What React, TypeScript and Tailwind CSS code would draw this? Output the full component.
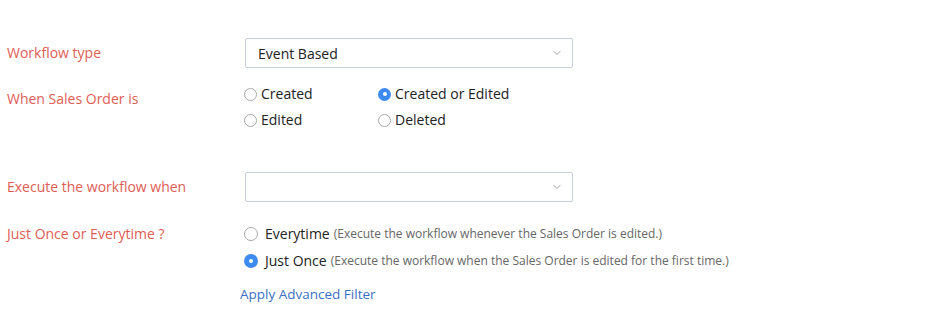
import { ChevronDown } from "lucide-react";

const Radio = ({ checked, size = 13 }: { checked?: boolean; size?: number }) => {
  if (checked) {
    return (
      <span
        className="flex items-center justify-center rounded-full bg-[#3d8bf2] shrink-0"
        style={{ width: size, height: size }}
      >
        <span className="w-[4px] h-[4px] rounded-full bg-white" />
      </span>
    );
  }
  return (
    <span
      className="rounded-full border border-[#a9a9a9] bg-white shrink-0"
      style={{ width: size, height: size }}
    />
  );
};

const Select = ({ value }: { value?: string }) => (
  <div className="w-[328px] h-[30px] border border-[#c7cfdb] rounded-[2px] bg-white flex items-center justify-between pl-[12px] pr-[9px]">
    <span className="text-[14px] text-[#222]">{value}</span>
    <ChevronDown size={12} strokeWidth={2} className="text-[#a0a0a0]" />
  </div>
);

const Label = ({ children, className = "" }: { children: React.ReactNode; className?: string }) => (
  <div className={`w-[245px] shrink-0 pl-[7px] text-[14px] text-[#df5d55] ${className}`}>{children}</div>
);

export default function App() {
  return (
    <div
      className="w-[945px] h-[313px] bg-white"
      style={{ fontFamily: "'Open Sans', Lato, sans-serif" }}
    >
      <div className="flex pt-[38px] items-center">
        <Label className="leading-[30px]">Workflow type</Label>
        <Select value="Event Based" />
      </div>

      <div className="flex mt-[16px]">
        <Label className="pt-[5px] leading-[20px]">When Sales Order is</Label>
        <div className="grid grid-cols-[134px_auto] gap-y-[6px] -ml-[1px] text-[14px] text-[#222] leading-[20px]">
          <label className="flex items-center gap-[4px]"><Radio />Created</label>
          <label className="flex items-center gap-[4px]"><Radio checked />Created or Edited</label>
          <label className="flex items-center gap-[4px]"><Radio />Edited</label>
          <label className="flex items-center gap-[4px]"><Radio />Deleted</label>
        </div>
      </div>

      <div className="flex mt-[42px] items-center">
        <Label className="leading-[30px]">Execute the workflow when</Label>
        <Select />
      </div>

      <div className="flex mt-[22px]">
        <Label className="leading-[20px]">Just Once or Everytime ?</Label>
        <div className="flex flex-col gap-[7px] -ml-[1px] leading-[20px]">
          <label className="flex items-center gap-[7px]">
            <Radio size={14} />
            <span className="text-[14px] text-[#222]">Everytime</span>
            <span className="text-[12px] text-[#666] -ml-[3px]">(Execute the workflow whenever the Sales Order is edited.)</span>
          </label>
          <label className="flex items-center gap-[7px]">
            <Radio checked size={14} />
            <span className="text-[14px] text-[#222]">Just Once</span>
            <span className="text-[12px] text-[#666] -ml-[3px]">(Execute the workflow when the Sales Order is edited for the first time.)</span>
          </label>
          <a className="mt-[6px] -ml-[4px] text-[13.5px] text-[#3b6fc4] cursor-pointer">Apply Advanced Filter</a>
        </div>
      </div>
    </div>
  );
}
